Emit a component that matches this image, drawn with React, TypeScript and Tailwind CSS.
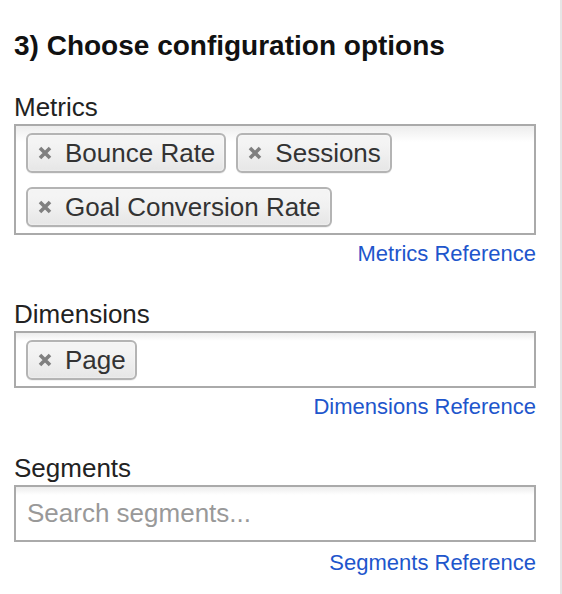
const font = { fontFamily: '"Liberation Sans", Arial, Helvetica, sans-serif' };

const RemoveIcon = () => (
  <svg width="14" height="14" viewBox="0 0 14 14" className="shrink-0">
    <path d="M2 2 L12 12 M12 2 L2 12" stroke="#808080" strokeWidth="3.6" />
  </svg>
);

const Chip = ({ label }: { label: string }) => (
  <div className="flex h-[40px] items-center rounded-[6px] border-2 border-[#b4b4b4] bg-linear-to-b from-[#f4f4f4] from-20% via-[#f0f0f0] via-50% to-[#e6e6e6] pl-[10px] pr-[9px] text-[26px] leading-[36px] text-[#333] shadow-[inset_0_0_2px_white,0_1px_0_rgba(0,0,0,0.05)]">
    <RemoveIcon />
    <span className="ml-[13px]">{label}</span>
  </div>
);

const Field = ({
  label,
  chips,
  placeholder,
  link,
  first,
}: {
  label: string;
  chips?: string[];
  placeholder?: string;
  link: string;
  first?: boolean;
}) => (
  <div className={first ? "mt-[30px]" : "mt-[32px]"}>
    <div className="text-[26px] leading-[30px] text-[#222]">{label}</div>
    <div className="mt-[2px] border-2 border-[#aaa] bg-linear-to-b from-[#eeeeee] from-[1%] to-white to-[15%]">
      {chips ? (
        <div className="flex flex-wrap gap-x-[10px] gap-y-[14px] pl-[10px] pr-[10px] pt-[7px] pb-[6px]">
          {chips.map((c) => (
            <Chip key={c} label={c} />
          ))}
        </div>
      ) : (
        <div className="h-[53px] pl-[11px] text-[26px] leading-[53px] text-[#999]">{placeholder}</div>
      )}
    </div>
    <div className={placeholder ? "mt-[8px] text-right text-[22px] leading-[26px] text-[#1e56cc]" : "mt-[6px] text-right text-[22px] leading-[26px] text-[#1e56cc]"}>{link}</div>
  </div>
);

export default function App() {
  return (
    <div style={font} className="min-h-[594px] w-[562px] border-r-2 border-[#e6e6e6] bg-white pl-[14px] pt-[30px]">
      <div className="w-[522px]">
        <h2 className="text-[28px] font-bold leading-[32px] text-[#111]">3) Choose configuration options</h2>
        <Field first label="Metrics" chips={["Bounce Rate", "Sessions", "Goal Conversion Rate"]} link="Metrics Reference" />
        <Field label="Dimensions" chips={["Page"]} link="Dimensions Reference" />
        <div className="pt-[1px]">
          <Field label="Segments" placeholder="Search segments..." link="Segments Reference" />
        </div>
      </div>
    </div>
  );
}
